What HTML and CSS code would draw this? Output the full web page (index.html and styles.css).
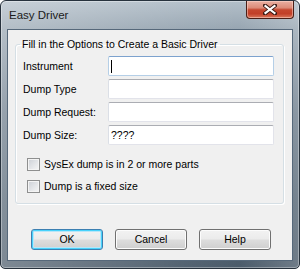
FILE: index.html
```html
<!DOCTYPE html>
<html>
<head>
<meta charset="utf-8">
<link rel="stylesheet" href="styles.css">
</head>
<body>
<div class="window">
  <div class="titlebar">
    <span class="title">Easy Driver</span>
    <div class="close">
      <svg width="14" height="11" viewBox="0 0 14 11">
        <path d="M2 1.5 L12 9.5 M12 1.5 L2 9.5" stroke="#3a1a14" stroke-width="4" stroke-linecap="square" fill="none"/>
        <path d="M2.5 2 L11.5 9 M11.5 2 L2.5 9" stroke="#ffffff" stroke-width="2.2" stroke-linecap="square" fill="none"/>
      </svg>
    </div>
  </div>
  <div class="client">
    <fieldset class="group">
      <legend>Fill in the Options to Create a Basic Driver</legend>
      <div class="form">
        <span class="label">Instrument</span>
        <div class="field focus"><span class="caret"></span></div>
        <span class="label">Dump Type</span>
        <div class="field"></div>
        <span class="label">Dump Request:</span>
        <div class="field"></div>
        <span class="label">Dump Size:</span>
        <div class="field">????</div>
      </div>
      <div class="checks">
        <div class="check"><span class="box"></span><span>SysEx dump is in 2 or more parts</span></div>
        <div class="check"><span class="box"></span><span>Dump is a fixed size</span></div>
      </div>
    </fieldset>
    <div class="buttons">
      <div class="btn default">OK</div>
      <div class="btn">Cancel</div>
      <div class="btn">Help</div>
    </div>
  </div>
</div>
</body>
</html>
```
FILE: styles.css
```css
html, body {
  margin: 0;
  padding: 0;
  background: #ffffff;
}
.window {
  box-sizing: border-box;
  width: 300px;
  height: 269px;
  border: 1px solid #27323d;
  border-radius: 6px 6px 5px 5px;
  padding: 0 6px 7px 6px;
  display: flex;
  flex-direction: column;
  background:
    linear-gradient(90deg, rgba(255,255,255,0.28) 0, rgba(255,255,255,0.05) 60%, rgba(255,255,255,0) 80%, rgba(255,255,255,0.2) 100%),
    linear-gradient(180deg, #b3bfc9 0, #98a6b2 28px, #6f7f8e 110px, #556675 200px, #4b5b6a 269px);
  box-shadow: inset 0 0 0 1px rgba(255,255,255,0.35);
  font-family: "Liberation Sans", Arial, sans-serif;
}
.titlebar {
  height: 28px;
  display: flex;
  align-items: flex-start;
  margin: 0 -6px;
  padding-left: 8px;
}
.title {
  font-family: "Liberation Sans", Arial, sans-serif;
  font-size: 11.5px;
  line-height: 14px;
  padding-top: 7px;
  color: #1b1b1b;
}
.close {
  margin-left: auto;
  margin-right: 5px;
  width: 48px;
  height: 18px;
  box-sizing: border-box;
  border: 1px solid #4a1e16;
  border-top: none;
  border-radius: 0 0 4px 4px;
  background: linear-gradient(180deg, #eab0a2 0, #dc8b78 40%, #c5472f 52%, #c23f28 75%, #d9785c 100%);
  box-shadow: inset 0 0 0 1px rgba(255,220,210,0.5);
  display: flex;
  align-items: center;
  justify-content: center;
}
.close svg {
  display: block;
}
.client {
  flex: 1;
  background: #f0f0f0;
  border: 1px solid #56687a;
  padding: 8px 0 0 0;
  display: flex;
  flex-direction: column;
  font-size: 10.5px;
  color: #000;
}
.group {
  box-sizing: border-box;
  width: 269px;
  margin: 0 0 0 7px;
  padding: 0 8px 10px 4px;
  border: 1px solid #d5dfe5;
  border-radius: 3px;
  box-shadow: inset 1px 1px 0 #ffffff, 1px 1px 0 #ffffff;
  min-width: 0;
}
.group legend {
  padding: 0 2px;
  font-size: 10.5px;
  line-height: 13px;
}
.form {
  margin: 5px 0 0 3px;
  display: grid;
  grid-template-columns: 85px 166px;
  grid-auto-rows: 20px;
  row-gap: 3px;
  align-items: center;
}
.label {
  line-height: 13px;
}
.field {
  box-sizing: border-box;
  height: 20px;
  background: #ffffff;
  border: 1px solid #e2e3ea;
  border-top-color: #abadb3;
  border-left-color: #dbdfe6;
  border-radius: 2px;
  padding: 3px 2px 0 2px;
  line-height: 13px;
}
.field.focus {
  border-color: #b5cfe7;
  border-top-color: #7da2ce;
}
.caret {
  display: block;
  width: 1px;
  height: 13px;
  background: #000;
}
.checks {
  margin-top: 13px;
  padding-left: 7px;
  display: flex;
  flex-direction: column;
  gap: 9px;
}
.check {
  display: flex;
  align-items: center;
  gap: 4px;
  height: 13px;
  line-height: 13px;
}
.box {
  box-sizing: border-box;
  width: 13px;
  height: 13px;
  border: 1px solid #8e8f8f;
  background: linear-gradient(135deg, #cbcfd5 0, #e2e4e7 50%, #f6f6f6 100%);
  box-shadow: inset 0 0 0 1px #f4f4f4;
}
.buttons {
  margin-top: 25px;
  padding-left: 23px;
  display: flex;
  gap: 12px;
}
.btn {
  box-sizing: border-box;
  width: 72px;
  height: 21px;
  border: 1px solid #707070;
  border-radius: 3px;
  background: linear-gradient(180deg, #f2f2f2 0, #ebebeb 48%, #dddddd 52%, #cfcfcf 100%);
  box-shadow: inset 0 0 0 1px #fcfcfc;
  display: flex;
  align-items: center;
  justify-content: center;
  font-size: 10.5px;
  line-height: 13px;
}
.btn.default {
  border-color: #3c7fb1;
  box-shadow: inset 0 0 0 1px #48d2fb, inset 0 0 0 2px #b8e6f8;
}
```
